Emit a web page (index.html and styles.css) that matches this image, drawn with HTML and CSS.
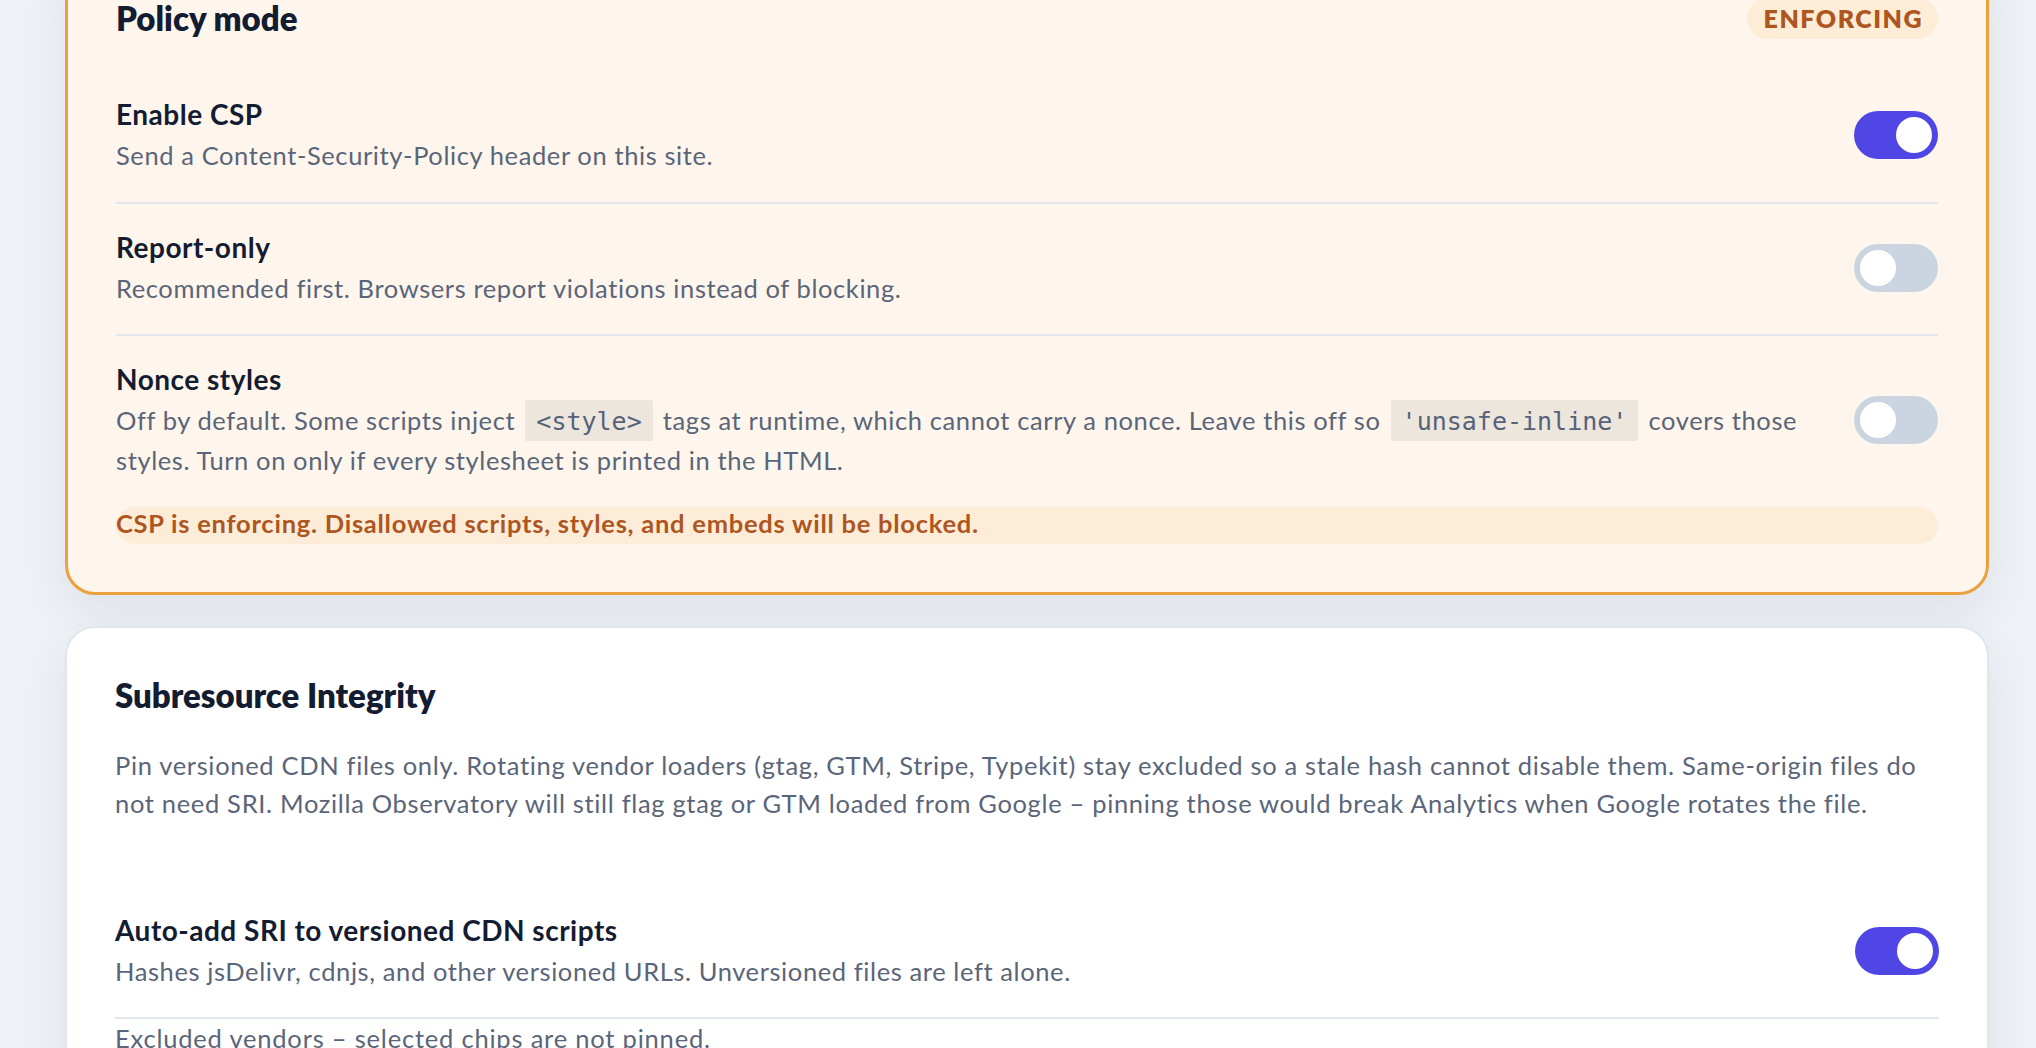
FILE: index.html
```html
<!DOCTYPE html>
<html lang="en">
<head>
<meta charset="utf-8">
<title>Security settings</title>
<link rel="stylesheet" href="styles.css">
</head>
<body>
<main class="page">
  <section class="card card-warn">
    <header class="card-head">
      <h2 class="card-title">Policy mode</h2>
      <span class="badge">Enforcing</span>
    </header>

    <div class="setting">
      <div class="setting-text">
        <div class="setting-label">Enable CSP</div>
        <p class="setting-desc">Send a Content-Security-Policy header on this site.</p>
      </div>
      <span class="toggle is-on" role="switch" aria-checked="true"><span class="knob"></span></span>
    </div>

    <div class="setting">
      <div class="setting-text">
        <div class="setting-label">Report-only</div>
        <p class="setting-desc">Recommended first. Browsers report violations instead of blocking.</p>
      </div>
      <span class="toggle" role="switch" aria-checked="false"><span class="knob"></span></span>
    </div>

    <div class="setting setting-last">
      <div class="setting-text">
        <div class="setting-label">Nonce styles</div>
        <p class="setting-desc">Off by default. Some scripts inject <code class="code">&lt;style&gt;</code> tags at runtime, which cannot carry a nonce. Leave this off so <code class="code">'unsafe-inline'</code> covers those<br>styles. Turn on only if every stylesheet is printed in the HTML.</p>
      </div>
      <span class="toggle" role="switch" aria-checked="false"><span class="knob"></span></span>
    </div>

    <p class="alert">CSP is enforcing. Disallowed scripts, styles, and embeds will be blocked.</p>
  </section>

  <section class="card card-plain">
    <h2 class="card-title">Subresource Integrity</h2>
    <p class="card-intro">Pin versioned CDN files only. Rotating vendor loaders (gtag, GTM, Stripe, Typekit) stay excluded so a stale hash cannot disable them. Same-origin files do<br>not need SRI. Mozilla Observatory will still flag gtag or GTM loaded from Google – pinning those would break Analytics when Google rotates the file.</p>

    <div class="setting setting-sri">
      <div class="setting-text">
        <div class="setting-label">Auto-add SRI to versioned CDN scripts</div>
        <p class="setting-desc">Hashes jsDelivr, cdnjs, and other versioned URLs. Unversioned files are left alone.</p>
      </div>
      <span class="toggle is-on" role="switch" aria-checked="true"><span class="knob"></span></span>
    </div>

    <p class="sub-label">Excluded vendors – selected chips are not pinned.</p>
  </section>
</main>
</body>
</html>
```

FILE: styles.css
```css
html, body {
  margin: 0;
  padding: 0;
  overflow: hidden;
}

body {
  background: #eef1f6;
  font-family: Lato, "Noto Sans", "Liberation Sans", sans-serif;
  color: #131c31;
  width: 2036px;
  height: 1048px;
}

.page {
  width: 1924px;
  padding-left: 65px;
}

.card {
  box-sizing: border-box;
  border-radius: 30px;
  box-shadow: 0 18px 48px rgba(30, 41, 59, 0.07);
}

.card-warn {
  margin-top: -53px;
  padding: 48px;
  background: #fef6ec;
  border: 3px solid #eba13c;
}

.card-plain {
  margin-top: 31px;
  padding: 47px 48px 48px;
  background: #ffffff;
  border: 2px solid #e0e6ee;
}

.card-head {
  display: flex;
  align-items: center;
  justify-content: space-between;
  margin-bottom: 32px;
}

.card-title {
  margin: 0;
  font-size: 33px;
  line-height: 41px;
  font-weight: 800;
  color: #131c31;
}

.badge {
  display: inline-block;
  height: 41px;
  line-height: 41px;
  padding: 0 15px 0 17px;
  border-radius: 999px;
  background: #fdedd7;
  color: #ad561f;
  font-size: 25px;
  font-weight: 800;
  letter-spacing: 1.5px;
  text-transform: uppercase;
}

.setting {
  display: flex;
  align-items: center;
  gap: 24px;
  padding: 25px 0 27.5px;
  border-bottom: 2px solid #e2e7ee;
}

.setting-last {
  border-bottom: 0;
}

.setting-text {
  flex: 1 1 auto;
  min-width: 0;
}

.setting-label {
  font-size: 28px;
  line-height: 36px;
  font-weight: 700;
  letter-spacing: 0.5px;
  color: #131c31;
}

.setting-desc {
  margin: 4px 0 0;
  font-size: 25.5px;
  line-height: 38px;
  letter-spacing: 0.6px;
  color: #5a6579;
}

.code {
  font-family: "DejaVu Sans Mono", "Liberation Mono", monospace;
  font-size: 25px;
  letter-spacing: 0;
  background: #ede6dc;
  color: #56617a;
  padding: 7px 11px 5px;
  margin: 0 3px;
  border-radius: 2px;
}

.toggle {
  box-sizing: border-box;
  flex: 0 0 84px;
  width: 84px;
  height: 48px;
  padding: 6px;
  border-radius: 24px;
  background: #cbd5e1;
  display: flex;
  justify-content: flex-start;
}

.toggle.is-on {
  background: #4f46e5;
  justify-content: flex-end;
}

.knob {
  width: 36px;
  height: 36px;
  border-radius: 50%;
  background: #ffffff;
}

.alert {
  margin: 0;
  height: 37px;
  line-height: 32px;
  border-radius: 19px;
  background: #fdedd8;
  color: #ad561f;
  font-size: 25.5px;
  font-weight: 700;
  letter-spacing: 0.75px;
}

.card-intro {
  margin: 30px 0 0;
  font-size: 25.5px;
  line-height: 38px;
  letter-spacing: 0.67px;
  color: #5a6579;
}

.setting-sri {
  margin-top: 65px;
}

.sub-label {
  margin: 0;
  padding-top: 0;
  font-size: 25.5px;
  line-height: 38px;
  letter-spacing: 0.8px;
  color: #5a6579;
}
```
